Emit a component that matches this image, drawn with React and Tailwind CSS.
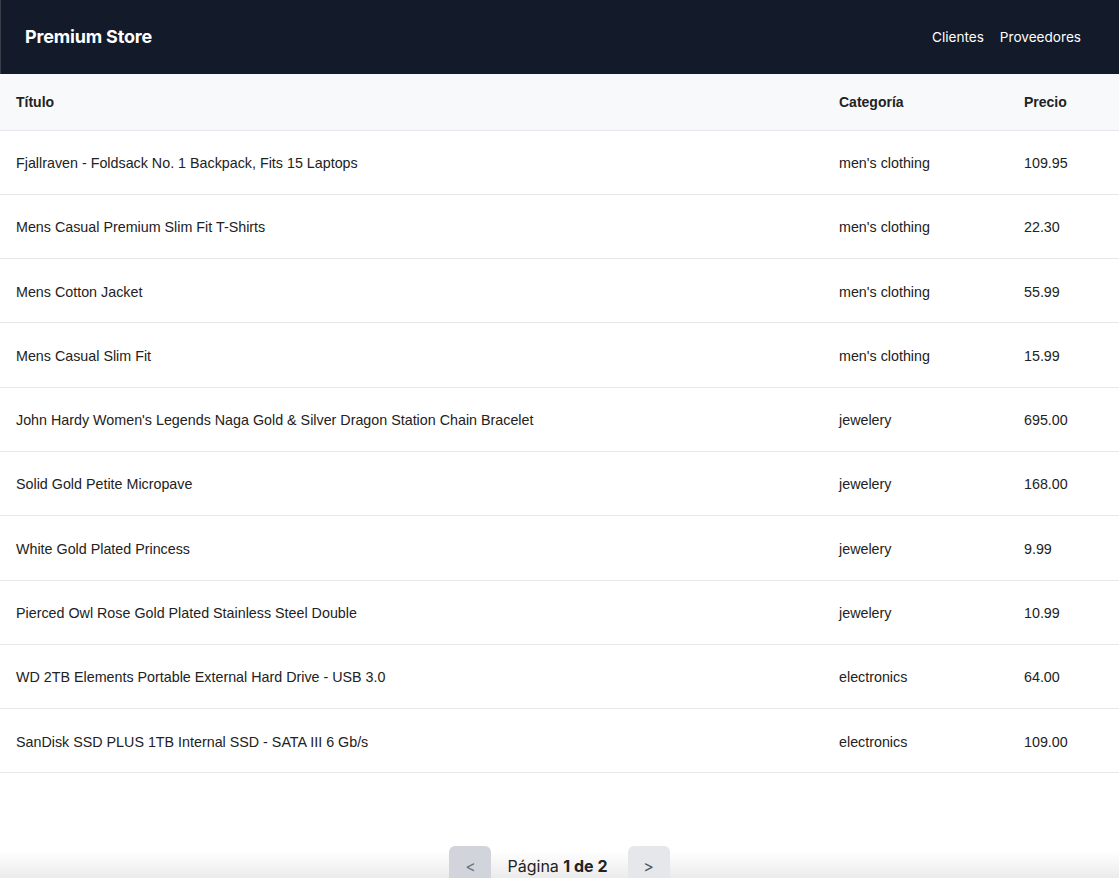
import { useState } from 'react';

const products = [
  { title: 'Fjallraven - Foldsack No. 1 Backpack, Fits 15 Laptops', category: "men's clothing", price: 109.95 },
  { title: 'Mens Casual Premium Slim Fit T-Shirts', category: "men's clothing", price: 22.3 },
  { title: 'Mens Cotton Jacket', category: "men's clothing", price: 55.99 },
  { title: 'Mens Casual Slim Fit', category: "men's clothing", price: 15.99 },
  { title: "John Hardy Women's Legends Naga Gold & Silver Dragon Station Chain Bracelet", category: 'jewelery', price: 695 },
  { title: 'Solid Gold Petite Micropave', category: 'jewelery', price: 168 },
  { title: 'White Gold Plated Princess', category: 'jewelery', price: 9.99 },
  { title: 'Pierced Owl Rose Gold Plated Stainless Steel Double', category: 'jewelery', price: 10.99 },
  { title: 'WD 2TB Elements Portable External Hard Drive - USB 3.0', category: 'electronics', price: 64 },
  { title: 'SanDisk SSD PLUS 1TB Internal SSD - SATA III 6 Gb/s', category: 'electronics', price: 109 },
];

export default function App() {
  const [page] = useState(1);

  return (
    <div className="min-h-screen bg-white font-['Inter',sans-serif]">
      <header className="h-[74px] bg-[#131a2a] border-l border-[#3a3f4a] flex items-center justify-between pl-6 pr-[38px]">
        <h1 className="text-lg font-bold tracking-[-0.01em] text-white">Premium Store</h1>
        <nav className="flex items-center gap-4 text-[13.6px] text-white">
          <a href="#">Clientes</a>
          <a href="#">Proveedores</a>
        </nav>
      </header>

      <table className="w-full border-collapse text-[14.3px] text-[#222] font-['Liberation_Sans',Arial,sans-serif]">
        <thead>
          <tr className="h-[56px] bg-[#f8f9fb] border-b border-gray-200 text-sm">
            <th className="pl-4 text-left font-bold">Título</th>
            <th className="w-[185px] text-left font-bold">Categoría</th>
            <th className="w-[95px] text-left font-bold">Precio</th>
          </tr>
        </thead>
        <tbody>
          {products.map((p) => (
            <tr key={p.title} className="h-[64.3px] border-b border-gray-200">
              <td className="pl-4 pt-[3px]">{p.title}</td>
              <td className="pt-[3px]">{p.category}</td>
              <td className="pt-[3px]">{p.price.toFixed(2)}</td>
            </tr>
          ))}
        </tbody>
      </table>

      <div className="mt-[64px] h-[70px] pt-[9px] bg-linear-to-b from-white via-white via-20% to-[#d6d6d6] flex items-start justify-center">
        <button className="w-[42px] h-10 rounded-md bg-[#d1d5db] text-gray-500">&lt;</button>
        <span className="h-10 ml-4 mr-5 flex items-center text-base text-[#222]">
          Página&nbsp;<b className="font-bold">{page} de 2</b>
        </span>
        <button className="w-[42px] h-10 rounded-md bg-[#e5e7eb] text-gray-600">&gt;</button>
      </div>
    </div>
  );
}
